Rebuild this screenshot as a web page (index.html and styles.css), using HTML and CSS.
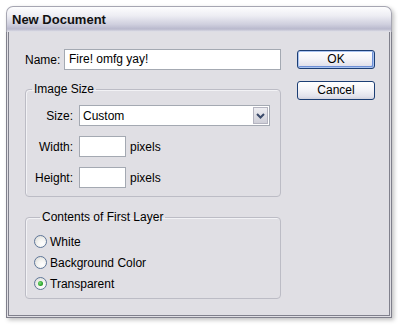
FILE: index.html
```html
<html>
  <head>
    <meta charset="utf-8" />
    <link rel="stylesheet" href="styles.css">
  </head>
  <body>
    <div class="window">
      <div class="titlebar">New Document</div>
      <div class="panel">
        <div class="main">
          <div class="row name-row">
            <span class="lbl-name">Name:</span>
            <div class="field name-field">Fire! omfg yay!</div>
          </div>

          <fieldset class="group size-group">
            <legend>Image Size</legend>
            <div class="row first">
              <span class="lbl">Size:</span>
              <div class="select">
                <span class="select-value">Custom</span>
                <span class="select-btn">
                  <svg width="9" height="6" viewBox="0 0 9 6"><path d="M1 1 L4.5 4.5 L8 1" fill="none" stroke="#3a4a6a" stroke-width="2"/></svg>
                </span>
              </div>
            </div>
            <div class="row">
              <span class="lbl">Width:</span>
              <div class="field small"></div>
              <span class="unit">pixels</span>
            </div>
            <div class="row">
              <span class="lbl">Height:</span>
              <div class="field small"></div>
              <span class="unit">pixels</span>
            </div>
          </fieldset>

          <fieldset class="group layer-group">
            <legend>Contents of First Layer</legend>
            <div class="radio"><span class="circle"></span>White</div>
            <div class="radio"><span class="circle"></span>Background Color</div>
            <div class="radio"><span class="circle checked"></span>Transparent</div>
          </fieldset>
        </div>

        <div class="buttons">
          <div class="btn default">OK</div>
          <div class="btn">Cancel</div>
        </div>
      </div>
    </div>
  </body>
</html>
```

FILE: styles.css
```css
body {
  margin: 0;
  background: #ffffff;
  font-family: "Liberation Sans", Arial, sans-serif;
  font-size: 12px;
  color: #000000;
}
.window {
  margin: 6px;
  width: 386px;
  box-shadow: 2px 2px 4px rgba(0, 0, 0, 0.25);
  border-radius: 7px 7px 0 0;
}
.titlebar {
  height: 26px;
  box-sizing: border-box;
  border: 1px solid #a6a6b2;
  border-bottom: none;
  border-radius: 7px 7px 0 0;
  padding: 1px 0 0 5px;
  line-height: 24px;
  font-weight: bold;
  font-size: 13px;
  color: #111111;
  background: linear-gradient(#fdfdfe 0%, #ededf3 35%, #cfcfde 70%, #b9b9cd 88%, #e4e4ea 100%);
}
.panel {
  height: 286px;
  box-sizing: border-box;
  display: flex;
  gap: 16px;
  padding: 17px 0 0 16px;
  background: #e0dfe4;
  border: 3px double #80808c;
  border-top: none;
}
.main {
  width: 256px;
}
.row {
  display: flex;
  align-items: center;
  height: 21px;
}
.lbl-name {
  width: 35px;
  margin-right: 4px;
  text-align: right;
}
.field {
  box-sizing: border-box;
  height: 21px;
  background: #ffffff;
  border: 1px solid #a4a9b2;
  padding-left: 4px;
  line-height: 19px;
}
.name-field {
  width: 217px;
}
.group {
  margin: 12px 0 0 0;
  padding: 0 0 8px 0;
  border: 1px solid #bcbcc5;
  border-radius: 4px;
  box-shadow: inset 1px 1px 0 #f2f2f5;
}
.group legend {
  margin-left: 6px;
  padding: 0 2px;
  line-height: 14px;
}
.size-group .row {
  margin-top: 10px;
}
.size-group .row.first {
  margin-top: 9px;
}
.lbl {
  width: 47px;
  margin-right: 6px;
  text-align: right;
}
.select {
  box-sizing: border-box;
  width: 191px;
  height: 21px;
  display: flex;
  align-items: center;
  justify-content: space-between;
  background: #ffffff;
  border: 1px solid #a4a9b2;
  padding: 0 1px 0 3px;
}
.select-btn {
  box-sizing: border-box;
  width: 15px;
  height: 17px;
  display: flex;
  align-items: center;
  justify-content: center;
  border: 1px solid #b4b4c0;
  background: linear-gradient(#eeeef2, #cfcfd8);
}
.small {
  width: 47px;
}
.unit {
  margin-left: 4px;
}
.layer-group {
  margin-top: 13px;
  padding: 7px 0 4px 8px;
}
.radio {
  display: flex;
  align-items: center;
  height: 21px;
}
.circle {
  box-sizing: border-box;
  width: 13px;
  height: 13px;
  margin-right: 3px;
  border-radius: 50%;
  border: 1px solid #5e7698;
  background: radial-gradient(circle at 65% 70%, #ffffff 0%, #f4f4f2 40%, #d6d6d2 100%);
  display: flex;
  align-items: center;
  justify-content: center;
}
.circle.checked::after {
  content: "";
  width: 5px;
  height: 5px;
  border-radius: 50%;
  background: radial-gradient(circle at 40% 40%, #7ee07e 0%, #2ba32b 60%, #1f8a1f 100%);
}
.buttons {
  width: 78px;
  display: flex;
  flex-direction: column;
  gap: 12px;
  padding-top: 1px;
}
.btn {
  box-sizing: border-box;
  height: 19px;
  line-height: 17px;
  text-align: center;
  border: 1px solid #1c3e74;
  border-radius: 3px;
  background: linear-gradient(#ffffff 0%, #f4f4f8 45%, #e2e2ec 85%, #d2d2de 100%);
}
.btn.default {
  box-shadow: inset 0 0 0 1px #a9c3f0, inset -1px -1px 0 1px #6d8fd6;
}
```
